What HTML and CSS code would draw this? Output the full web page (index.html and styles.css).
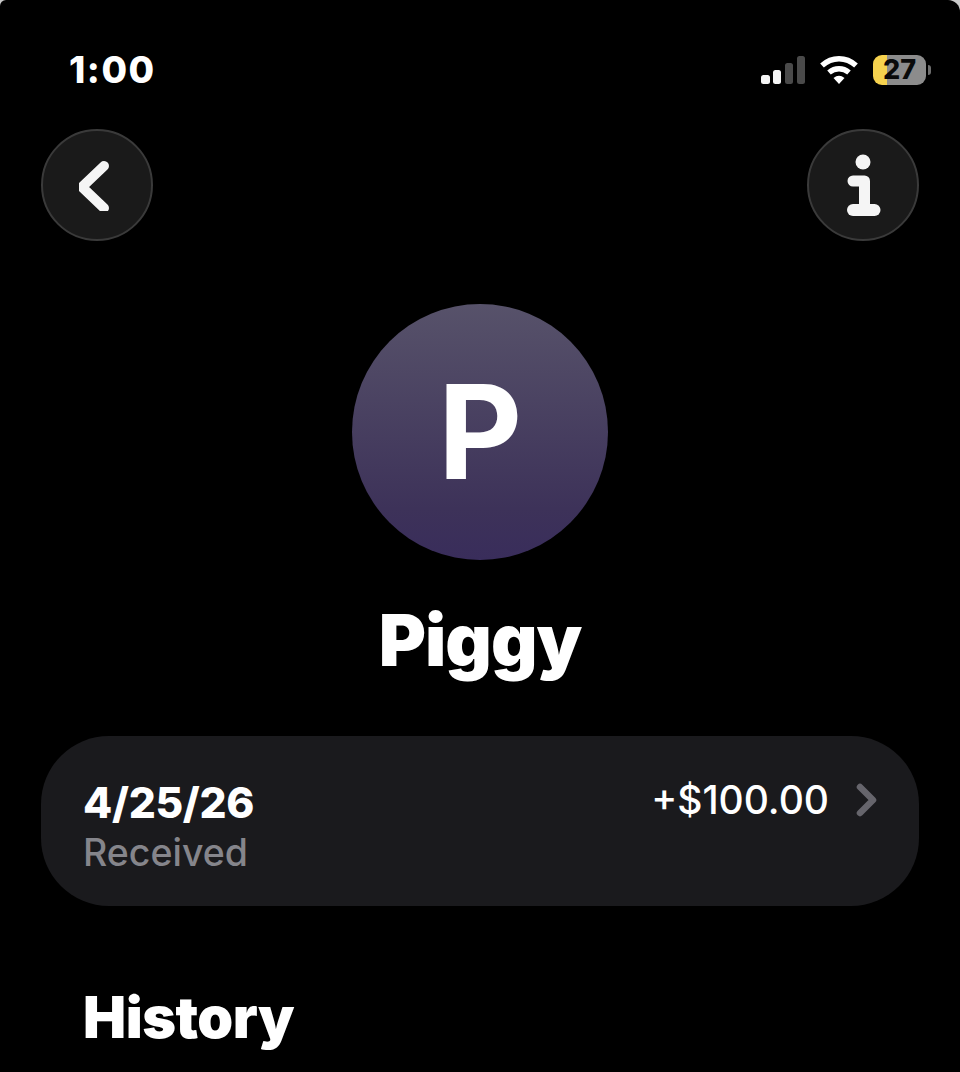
FILE: index.html
```html
<!DOCTYPE html>
<html lang="en">
<head>
<meta charset="utf-8">
<title>Piggy</title>
<link rel="stylesheet" href="styles.css">
</head>
<body>
<main class="screen">
  <header class="status">
    <span class="time">1:00</span>
    <div class="status-icons">
      <svg class="signal" width="44" height="28" viewBox="0 0 44 28">
        <rect x="0" y="19" width="9" height="9" rx="2.5" fill="#f5f5f5"/>
        <rect x="12" y="14" width="8" height="14" rx="2.5" fill="#f5f5f5"/>
        <rect x="24" y="7" width="8" height="21" rx="2.5" fill="#4a4a4a"/>
        <rect x="36" y="0" width="8" height="28" rx="2.5" fill="#4a4a4a"/>
      </svg>
      <svg class="wifi" width="40" height="28" viewBox="0 0 40 28">
        <path d="M3 9.500 C13 0.500 27 0.500 37 9.500" fill="none" stroke="#fff" stroke-width="5.500"/>
        <path d="M10 16.500 C16 11.500 24 11.500 30 16.500" fill="none" stroke="#fff" stroke-width="5.500"/>
        <path d="M14.500 22 Q20 17.500 25.500 22 L20 28 Z" fill="#fff"/>
      </svg>
      <div class="battery">
        <div class="battery-body"><span class="battery-level">27</span></div>
        <span class="battery-cap"></span>
      </div>
    </div>
  </header>

  <nav class="nav">
    <button class="round-btn" aria-label="Back">
      <svg width="36" height="52" viewBox="0 0 36 52"><path d="M25 7 L3 28 L25 49" fill="none" stroke="#f5f5f5" stroke-width="10" stroke-linecap="round" stroke-linejoin="round"/></svg>
    </button>
    <button class="round-btn" aria-label="Info">
      <svg width="36" height="62" viewBox="0 0 36 62"><circle cx="18" cy="8" r="7.500" fill="#f5f5f5"/><path d="M8 27 H19.500 V56" fill="none" stroke="#f5f5f5" stroke-width="11" stroke-linecap="round" stroke-linejoin="round"/><path d="M8 56 H29.500" fill="none" stroke="#f5f5f5" stroke-width="12" stroke-linecap="round"/></svg>
    </button>
  </nav>

  <section class="profile">
    <div class="avatar">P</div>
    <h1 class="name">Piggy</h1>
  </section>

  <article class="card">
    <div class="card-left">
      <span class="card-date">4/25/26</span>
      <span class="card-status">Received</span>
    </div>
    <div class="card-right">
      <span class="card-amount">+$100.00</span>
      <svg width="22" height="34" viewBox="0 0 22 34"><path d="M4 4 L17 17 L4 30" fill="none" stroke="#66656c" stroke-width="6.500" stroke-linecap="round" stroke-linejoin="round"/></svg>
    </div>
  </article>

  <h2 class="history">History</h2>
</main>
</body>
</html>
```

FILE: styles.css
```css
* { box-sizing: border-box; }
html, body { margin: 0; padding: 0; background: #c9c9c9; }
body { font-family: "Inter", "Liberation Sans", sans-serif; color: #fff; }

.screen {
  width: 960px;
  height: 1072px;
  overflow: hidden;
  background: #000;
  padding: 42px 41px 0;
  border-radius: 6px 12px 0 0;
}

.status {
  display: flex;
  justify-content: space-between;
  align-items: center;
  height: 56px;
  padding-left: 28px;
}
.time { font-size: 37px; font-weight: 800; line-height: 56px; letter-spacing: 1.500px; }

.status-icons { display: flex; align-items: center; gap: 14px; margin-right: -12px; }
.signal { margin-left: 1px; }
.battery { display: flex; align-items: center; gap: 2px; }
.battery-body {
  width: 53px;
  height: 30px;
  border-radius: 9px;
  background: linear-gradient(90deg, #f6d24e 0 27%, #8c8c8c 27% 100%);
  display: flex;
  align-items: center;
  justify-content: center;
}
.battery-level { font-size: 27px; font-weight: 800; color: #0a0a0a; line-height: 30px; }
.battery-cap { width: 3px; height: 10px; border-radius: 0 3px 3px 0; background: #6e6e6e; }

.nav {
  display: flex;
  justify-content: space-between;
  margin-top: 31px;
}
.round-btn {
  width: 112px;
  height: 112px;
  padding: 0;
  border-radius: 50%;
  border: 2px solid #3a3a3a;
  background: #1a1a1a;
  display: flex;
  align-items: center;
  justify-content: center;
}

.profile {
  display: flex;
  flex-direction: column;
  align-items: center;
  margin-top: 63px;
}
.avatar {
  width: 256px;
  height: 256px;
  border-radius: 50%;
  background: linear-gradient(180deg, #57526a 0%, #3d3259 80%, #392d5b 100%);
  display: flex;
  align-items: center;
  justify-content: center;
  font-size: 130px;
  font-weight: 650;
  line-height: 1;
}
.name { margin: 36px 0 0; font-size: 72px; font-weight: 900; line-height: 88px; letter-spacing: -1px; }

.card {
  margin-top: 52px;
  height: 170px;
  border-radius: 68px;
  background: #1a1a1d;
  display: flex;
  justify-content: space-between;
  padding: 42px 41px 0 42px;
}
.card-left { display: flex; flex-direction: column; }
.card-date { font-size: 42.500px; font-weight: 800; line-height: 50px; letter-spacing: -0.300px; }
.card-status { margin-top: 2px; font-size: 37.500px; font-weight: 500; color: #85858b; line-height: 46px; }
.card-right { display: flex; align-items: center; align-self: flex-start; gap: 27px; height: 44px; }
.card-amount { font-size: 39px; font-weight: 500; line-height: 44px; }

.history { margin: 78px 0 0 42px; font-size: 57.500px; font-weight: 900; line-height: 66px; letter-spacing: -0.500px; }
```
